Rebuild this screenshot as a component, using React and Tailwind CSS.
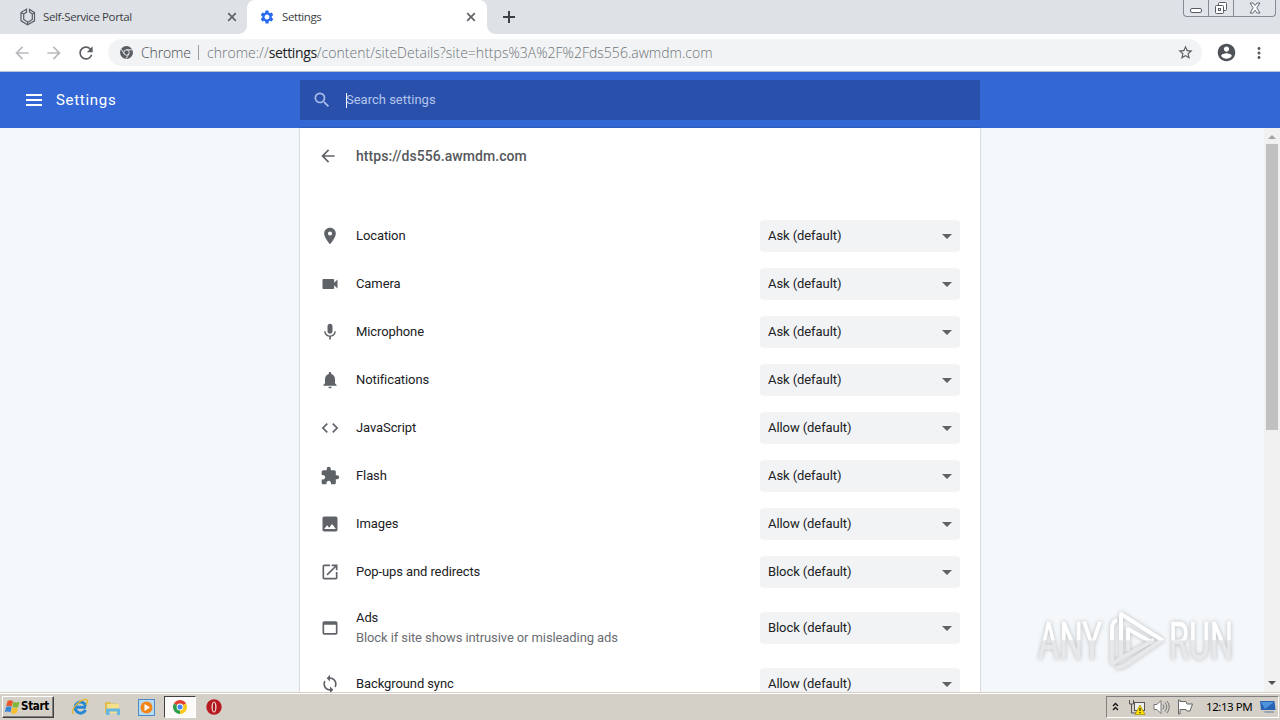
import React, { useState } from 'react';
import {
    MdArrowBack,
    MdArrowForward,
    MdCode,
    MdExtension,
    MdImage,
    MdLocationOn,
    MdMic,
    MdMoreVert,
    MdNotifications,
    MdOpenInNew,
    MdRefresh,
    MdSearch,
    MdSettings,
    MdStarBorder,
    MdSync,
    MdVideocam,
    MdWebAsset,
} from 'react-icons/md';

const permissions = [
    { id: 'location', label: 'Location', value: 'Ask (default)', Icon: MdLocationOn },
    { id: 'camera', label: 'Camera', value: 'Ask (default)', Icon: MdVideocam },
    { id: 'mic', label: 'Microphone', value: 'Ask (default)', Icon: MdMic },
    { id: 'notifications', label: 'Notifications', value: 'Ask (default)', Icon: MdNotifications },
    { id: 'javascript', label: 'JavaScript', value: 'Allow (default)', Icon: MdCode },
    { id: 'flash', label: 'Flash', value: 'Ask (default)', Icon: MdExtension },
    { id: 'images', label: 'Images', value: 'Allow (default)', Icon: MdImage },
    { id: 'popups', label: 'Pop-ups and redirects', value: 'Block (default)', Icon: MdOpenInNew },
    {
        id: 'ads',
        label: 'Ads',
        note: 'Block if site shows intrusive or misleading ads',
        value: 'Block (default)',
        Icon: MdWebAsset,
    },
    { id: 'sync', label: 'Background sync', value: 'Allow (default)', Icon: MdSync },
];

function PortalIcon() {
    return (
        <svg width="16" height="18" viewBox="0 0 16 18" fill="none" stroke="#5b5f66" strokeWidth="1.2">
            <path d="M6.5 1.2 1 4.6v8.2l6.500 4 7-4V4.600L9.500 1.400V4l2.800 2v5.500L8 14.300l-4.300-2.800V6l2.800-1.700z" />
            <path d="M1 4.600 3.700 6M14.500 4.600 12.300 6M7.600 16.500v-2.200" />
        </svg>
    );
}

function CloseIcon({ className }) {
    return (
        <svg className={className} width="14" height="14" viewBox="0 0 14 14" stroke="#5f6368" strokeWidth="1.700">
            <path d="M3.200 3.200l7.600 7.600M10.800 3.200l-7.600 7.600" />
        </svg>
    );
}

function ChromeMono() {
    return (
        <svg width="13" height="13" viewBox="0 0 24 24">
            <circle cx="12" cy="12" r="12" fill="#5a5e63" />
            <circle cx="12" cy="12" r="5" fill="none" stroke="#f1f3f4" strokeWidth="1.700" />
            <path d="M12 7h10.500M7.700 14.500 2.300 5.800M16.300 14.500 11 23.500" stroke="#f1f3f4" strokeWidth="1.700" />
        </svg>
    );
}

function ProfileIcon() {
    return (
        <svg className="ml-[14px]" width="21" height="21" viewBox="0 0 24 24" fill="#4f5358">
            <path d="M12 2C6.480 2 2 6.480 2 12s4.480 10 10 10 10-4.480 10-10S17.520 2 12 2zm0 3c1.660 0 3 1.340 3 3s-1.340 3-3 3-3-1.340-3-3 1.340-3 3-3zm0 14.200c-2.500 0-4.710-1.280-6-3.220.030-1.990 4-3.080 6-3.080s5.970 1.090 6 3.080c-1.290 1.940-3.500 3.220-6 3.220z" />
        </svg>
    );
}

function WindowButtons() {
    return (
        <div className="flex h-[17px] w-[93px] rounded-b-[4px] border border-t-0 border-[#858a95] bg-[#e1e4e9]">
            <div className="flex w-[25px] items-end justify-center border-r border-[#858a95] pb-[3px]">
                <div className="h-[5px] w-[12px] rounded-[2px] border border-[#565b66] bg-white" />
            </div>
            <div className="flex w-[25px] justify-center border-r border-[#858a95] pt-[1px]">
                <svg width="14" height="14" viewBox="0 0 14 14" fill="#fff" stroke="#565b66">
                    <rect x="4.500" y="1.500" width="8" height="8" rx="1" />
                    <rect x="1.500" y="4.500" width="8" height="8" rx="1" />
                    <rect x="4.500" y="7.500" width="2" height="2" />
                </svg>
            </div>
            <div className="flex flex-1 justify-center pt-[2px]">
                <svg width="12" height="12" viewBox="0 0 12 12" fill="#fff" stroke="#565b66" strokeWidth="0.900">
                    <path d="M1 1h3l2 2.500L8 1h3L7.800 5.800 11 11H8L6 8.200 4 11H1l3.200-5.200z" />
                </svg>
            </div>
        </div>
    );
}

function TabStrip() {
    return (
        <div className="flex h-[34px] bg-[#dee1e6] font-['Open_Sans','Noto_Sans',sans-serif] text-[11.500px] text-[#3c4043]">
            <div className="flex w-[247px] items-center pl-[20px]">
                <PortalIcon />
                <span className="ml-[7px] flex-1 whitespace-nowrap tracking-[-0.400px]">Self-Service Portal</span>
                <CloseIcon className="mr-[8px]" />
            </div>
            <div className="relative flex w-[240px] items-center rounded-t-[8px] bg-white pl-[12px]">
                {/* feet that blend the active tab into the toolbar */}
                <div className="absolute bottom-0 left-[-8px] size-[8px] bg-[radial-gradient(circle_at_0_0,#dee1e6_7.500px,#fff_8px)]" />
                <div className="absolute right-[-8px] bottom-0 size-[8px] bg-[radial-gradient(circle_at_100%_0,#dee1e6_7.500px,#fff_8px)]" />
                <MdSettings className="size-[16px] text-[#2a6cf0]" />
                <span className="ml-[7px] flex-1 whitespace-nowrap tracking-[-0.400px]">Settings</span>
                <CloseIcon className="mr-[9px]" />
            </div>
            <div className="flex flex-1 items-center pl-[16px]">
                <svg width="12" height="12" viewBox="0 0 12 12" fill="#3c4043">
                    <path d="M5 0h2v5h5v2H7v5H5V7H0V5h5z" />
                </svg>
            </div>
            <div className="pr-[4px]">
                <WindowButtons />
            </div>
        </div>
    );
}

function Toolbar() {
    return (
        <div className="flex h-[38px] items-center border-b border-[#b9c3d8] bg-white pl-[12px]">
            <MdArrowBack className="size-[20px] text-[#b8babd]" />
            <MdArrowForward className="ml-[12px] size-[20px] text-[#b8babd]" />
            <MdRefresh className="ml-[12px] size-[20px] text-[#5a5e63]" />
            <div className="ml-[12px] flex h-[27px] w-[1094px] items-center rounded-full bg-[#f1f3f4] pl-[12px] font-['Open_Sans','Noto_Sans',sans-serif] text-[14px] font-light">
                <ChromeMono />
                <span className="ml-[8px] w-[49px] whitespace-nowrap pb-px tracking-[-0.150px] text-[#4a4d51]">Chrome</span>
                <span className="ml-[8px] h-[15px] w-px bg-[#9a9da1]" />
                <span className="ml-[8px] flex-1 whitespace-nowrap pb-px tracking-[0.020px] text-[#6f7378]">
                    chrome://<span className="font-normal tracking-[-0.350px] text-[#202124]">settings</span>
                    /content/siteDetails?site=https%3A%2F%2Fds556.awmdm.com
                </span>
                <MdStarBorder className="mr-[8px] size-[17px] text-[#5a5e63]" />
            </div>
            <ProfileIcon />
            <MdMoreVert className="ml-[13px] size-[18px] text-[#5a5e63]" />
        </div>
    );
}

function Header() {
    return (
        <div className="flex h-[56px] items-center bg-[#3367d6]">
            <div className="flex w-[300px] items-center pl-[26px] text-white">
                <svg width="16" height="12" viewBox="0 0 16 12" fill="currentColor">
                    <path d="M0 0h16v2H0zM0 5h16v2H0zM0 10h16v2H0z" />
                </svg>
                <span className="ml-[14px] pt-px text-[15px] tracking-[0.700px]">Settings</span>
            </div>
            <div className="flex h-[40px] w-[680px] items-center bg-[#2950ab] pl-[12px]">
                <MdSearch className="size-[20px] text-[#a9bde8]" />
                <span className="ml-[14px] h-[15px] w-px bg-white" />
                <span className="ml-[-1px] text-[13px] text-[#b5c6ee]">Search settings</span>
            </div>
        </div>
    );
}

function PermissionRow({ item }) {
    const { Icon, label, note, value } = item;
    return (
        <div className={note ? 'flex h-[64px] shrink-0 items-center px-5' : 'flex h-[48px] shrink-0 items-center px-5'}>
            <Icon className="size-[20px] text-[#5f6368]" />
            <div className="ml-4 flex-1 leading-[20px] tracking-[-0.100px]">
                <div className="text-[#202124]">{label}</div>
                {note && <div className="text-[#6a6e73]">{note}</div>}
            </div>
            <div className="flex h-[32px] w-[200px] items-center justify-between rounded-[4px] bg-[#f1f3f4] px-[8px] tracking-[-0.080px] text-[#202124]">
                <span>{value}</span>
                <svg width="10" height="5" viewBox="0 0 10 5" fill="#5f6368">
                    <path d="M0 0h10L5 5z" />
                </svg>
            </div>
        </div>
    );
}

function Scrollbar() {
    return (
        <div className="flex w-[16px] flex-col items-center bg-[#f1f1f1]">
            <div className="flex h-[16px] items-center pt-[2px]">
                <svg width="8" height="4" viewBox="0 0 8 4" fill="#a3a3a3">
                    <path d="M0 4h8L4 0z" />
                </svg>
            </div>
            <div className="h-[286px] w-[12px] bg-[#c1c1c1]" />
            <div className="mt-auto flex h-[18px] items-center">
                <svg width="8" height="4" viewBox="0 0 8 4" fill="#505050">
                    <path d="M0 0h8L4 4z" />
                </svg>
            </div>
        </div>
    );
}

function Watermark() {
    return (
        <svg
            className="absolute top-[606px] left-[1034px] drop-shadow-[0_0_2px_rgba(0,0,0,0.250)]"
            width="244"
            height="68"
            viewBox="0 0 244 68"
        >
            <defs>
                <linearGradient id="fade" gradientUnits="userSpaceOnUse" x1="0" y1="0" x2="0" y2="68">
                    <stop offset="0.500" stopColor="#ffffff" />
                    <stop offset="0.510" stopColor="#e6e8ea" />
                </linearGradient>
            </defs>
            <g fill="url(#fade)" stroke="url(#fade)" strokeWidth="0.600" fontFamily="Roboto, sans-serif" fontSize="51">
                <text x="4" y="53" textLength="64" lengthAdjust="spacingAndGlyphs">ANY</text>
                <text x="135" y="53" textLength="64" lengthAdjust="spacingAndGlyphs">RUN</text>
            </g>
            <g fill="none" stroke="url(#fade)" strokeWidth="4" strokeLinejoin="round">
                <path d="M78 58V23q0-7 5-9M87 52V8l41 26-38 26-8 2M87 8l-1-1M94 45V23l25 14M87 52l33-18M78 58l9-6" />
            </g>
        </svg>
    );
}

function StartFlag() {
    return (
        <svg width="17" height="16" viewBox="0 0 16 16">
            <path d="M3 2c2-1 4-1 5.500.3L7.300 7.500C5.500 6.300 3.500 6.500 1.700 7.300z" fill="#e8562a" />
            <path d="M9 2.700c2 1 3.800 1 6 0l-1.300 5.200c-2 1-3.900.8-5.800-.2z" fill="#7db83a" />
            <path d="M1.500 7.900c2-.9 3.900-.9 5.600.2L5.900 13.500C4.300 12.300 2.200 12.400.3 13.200z" fill="#3b87d6" />
            <path d="M7.700 8.400c1.900 1 3.900 1 5.800.1L12.200 14c-2 .9-3.800.9-5.700-.3z" fill="#f7bd2b" />
        </svg>
    );
}

function QuickLaunch() {
    return (
        <div className="flex items-center">
            <svg className="ml-[17px]" width="18" height="18" viewBox="0 0 18 18" fill="none">
                <path d="M14.500 12a5.500 5.500 0 1 1 .3-4M4 9.300h11" stroke="#2687d2" strokeWidth="3" />
                <path d="M2.500 16C-1 13 8 1 15 1.500c3 .5 1.500 3.500 0 5.500" stroke="#e5b72e" strokeWidth="1.300" />
            </svg>
            <svg className="ml-[15px]" width="17" height="17" viewBox="0 0 17 17">
                <path d="M1 3h5l1 1.500h7V14H1z" fill="#dfbd4e" />
                <path d="M3 5h12v9H3z" fill="#f5df88" />
                <path d="M2 16V9.500h14V16h-3v-3.500H5.500V16z" fill="#67b7e3" />
            </svg>
            <svg className="ml-[17px]" width="17" height="17" viewBox="0 0 17 17">
                <rect x="0.500" y="0.500" width="16" height="16" fill="#b8dbf4" stroke="#4a8ac8" />
                <circle cx="8.500" cy="8.500" r="6" fill="#f28518" />
                <path d="M6.500 5v7l5.500-3.500z" fill="#fff" />
            </svg>
            <div className="ml-[9px] flex h-[22px] w-[32px] items-center justify-center border border-t-[#404040] border-r-white border-b-white border-l-[#404040] bg-[#fbfaf8]">
                <svg width="14" height="14" viewBox="0 0 14 14">
                    <path d="M7 7 .940 3.500A7 7 0 0 1 13.060 3.500z" fill="#e0412f" />
                    <path d="M7 7 13.060 3.500A7 7 0 0 1 7 14z" fill="#fbc716" />
                    <path d="M7 7v7A7 7 0 0 1 .940 3.500z" fill="#2e9f4b" />
                    <circle cx="7" cy="7" r="3.400" fill="#fff" />
                    <circle cx="7" cy="7" r="2.500" fill="#4285f4" />
                </svg>
            </div>
            <svg className="ml-[10px]" width="16" height="16" viewBox="0 0 16 16">
                <circle cx="8" cy="8" r="7.700" fill="#b71920" />
                <ellipse cx="8" cy="8" rx="2.500" ry="5.500" fill="#f4dada" />
                <ellipse cx="8" cy="8" rx="1.200" ry="4.600" fill="#a5151b" />
            </svg>
        </div>
    );
}

function Tray() {
    return (
        <div className="flex h-[22px] w-[173px] items-center border border-t-[#808080] border-r-white border-b-white border-l-[#808080] pb-px pl-[5px]">
            <svg width="7" height="9" viewBox="0 0 7 9" fill="none" stroke="#111" strokeWidth="1.300">
                <path d="M1 4l2.500-2.500L6 4M1 8l2.500-2.500L6 8" />
            </svg>
            <svg className="ml-[10px]" width="17" height="16" viewBox="0 0 17 16">
                <rect x="5.500" y="3.500" width="10" height="8" fill="#eee" stroke="#555" />
                <path d="M.500 1v4h4V1M2.500 5v9h6" fill="none" stroke="#555" />
                <path d="M11 6l5 9.500H6z" fill="#ffe100" stroke="#a08600" strokeWidth="0.700" />
                <path d="M11 9v3M11 13v1.200" stroke="#222" strokeWidth="1.200" />
            </svg>
            <svg className="ml-[7px]" width="17" height="16" viewBox="0 0 17 16" fill="none" stroke="#777">
                <path d="M1 5.500h3L8 1.500v13l-4-4H1z" fill="#fff" />
                <path d="M10 5.500q2 2.500 0 5M12 3.500q3.500 4.500 0 9M14 2q4.500 6 0 12" />
            </svg>
            <svg className="ml-[7px]" width="17" height="16" viewBox="0 0 17 16" fill="#fff" stroke="#666">
                <path d="M1.500 1v14h1.500V10.500h6l1 1.500h3l2.500-7H10L9 2.500H3V1z" />
            </svg>
            <span className="ml-[12px] flex-1 whitespace-nowrap font-['Noto_Sans',sans-serif] text-[11.500px] leading-[16px] tracking-[-0.450px] text-black">
                12:13 PM
            </span>
            <svg className="mr-[2px]" width="16" height="14" viewBox="0 0 16 14">
                <path d="M0 1h14.500l1 9H1z" fill="#2a62b5" />
                <path d="M1 2h13L5 9z" fill="#4d94dc" />
                <path d="M3 11h11v2H5z" fill="#9ba7b5" />
            </svg>
        </div>
    );
}

function Taskbar() {
    return (
        <div className="flex h-[28px] items-center justify-between border-t border-[#d4d0c8] bg-[#d4d0c8] pr-px shadow-[inset_0_1px_0_#fff]">
            <div className="flex items-center pt-px pl-[2px]">
                <div className="flex h-[22px] w-[52px] items-center border border-t-white border-r-[#404040] border-b-[#404040] border-l-white pl-px shadow-[inset_-1px_-1px_0_#808080]">
                    <StartFlag />
                    <span className="font-['DejaVu_Sans_Condensed','DejaVu_Sans',sans-serif] text-[11.500px] font-bold tracking-[-0.300px] text-black">
                        Start
                    </span>
                </div>
                <QuickLaunch />
            </div>
            <div className="pt-px">
                <Tray />
            </div>
        </div>
    );
}

function App() {
    const [items] = useState(permissions);

    return (
        <div className="relative flex h-[720px] w-[1280px] flex-col overflow-hidden bg-white font-['Roboto',sans-serif]">
            <TabStrip />
            <Toolbar />
            <Header />
            <div className="flex h-[564px] bg-[#f5f8fb]">
                <div className="ml-[300px] flex w-[680px] flex-col overflow-hidden bg-white text-[13px] shadow-[0_0_2px_rgba(0,0,0,0.350)]">
                    <div className="flex h-[56px] shrink-0 items-center pl-[18px]">
                        <MdArrowBack className="size-[20px] text-[#5f6368]" />
                        <h1 className="ml-[18px] text-[14px] font-medium tracking-[0.050px] text-[#55585c]">
                            https://ds556.awmdm.com
                        </h1>
                    </div>
                    <div className="mt-[28px] flex flex-col">
                        {items.map((item) => (
                            <PermissionRow key={item.id} item={item} />
                        ))}
                    </div>
                </div>
                <div className="flex-1" />
                <Scrollbar />
            </div>
            <Taskbar />
            <Watermark />
        </div>
    );
}

export default App;
